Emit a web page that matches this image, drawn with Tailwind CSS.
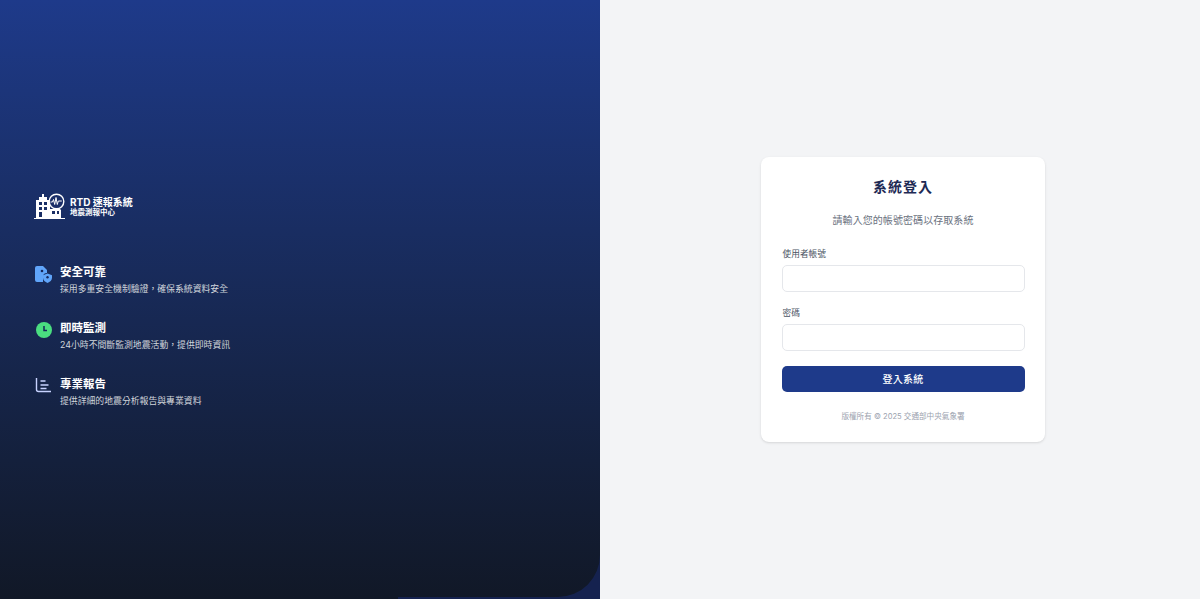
<!DOCTYPE html>
<html lang="zh-Hant">
<head>
<meta charset="utf-8">
<title>系統登入</title>
<script src="https://cdn.jsdelivr.net/npm/@tailwindcss/browser@4"></script>
</head>
<body class="font-['Inter','Noto_Sans_CJK_TC',sans-serif] bg-[#f3f4f6]">
<div class="flex h-[599px] w-[1200px] overflow-hidden">
    <!-- left panel -->
    <div class="w-[600px] h-full bg-[linear-gradient(to_right,#111827_398px,#15224f_398px)]">
        <div class="h-[597px] w-full pt-[3px] bg-gradient-to-b from-[#1e3a8a] to-[#111827] rounded-br-[42px] flex flex-col justify-center pl-[35px]">
            <div class="flex items-center h-[27px]">
                <svg class="w-[31px] h-[27px] ml-[-1px] text-white" viewBox="0 0 31 27" fill="none">
                    <path fill="currentColor" fill-rule="evenodd" d="M0 25h2V7h3V4h3V1h2v3h3v3h3v9h10l1 1v8h4v1H0zM5 9v3h3V9H5zm5 0v3h3V9h-3zM5 14v3h3v-3H5zm5 0v3h3v-3h-3zM5 19v5h3v-5H5zm13-1v3h3v-3h-3zm5 0v3h2v-3h-2z"/>
                    <circle cx="22.500" cy="8.500" r="7.300" fill="#1a2e68" stroke="currentColor" stroke-width="1.400"/>
                    <path stroke="currentColor" stroke-width="1" d="M16.500 9h2l1-2.500 1.200 5 1.300-7 1.300 7 1-3.500h3.500"/>
                </svg>
                <div class="ml-[5px] flex flex-col text-white">
                    <span class="text-[10px] leading-[12px] font-bold">RTD 速報系統</span>
                    <span class="text-[7.500px] leading-[10px] font-bold">地震測報中心</span>
                </div>
            </div>
            <div class="mt-[44px] flex flex-col gap-[25px]">
                <div class="flex items-start">
                    <svg class="w-[17px] h-[17px] mt-[2px] text-[#60a5fa]" viewBox="0 0 17 17">
                        <path fill="currentColor" d="M0 2a2 2 0 0 1 2-2h6l4 4v3a4 4 0 0 0-4 3v6H2a2 2 0 0 1-2-2z"/>
                        <path fill="currentColor" d="M12.500 7.500 17 9.200v2.600c0 2.400-2 4.200-4.500 5.200C10 16 8 14.200 8 11.800V9.200z"/>
                        <circle cx="12.500" cy="11.200" r="1.200" fill="#16275c"/>
                        <circle cx="7" cy="5" r="1.300" fill="#16275c"/>
                    </svg>
                    <div class="ml-[8px] flex flex-col">
                        <span class="text-[11.500px] leading-[17px] font-bold text-white">安全可靠</span>
                        <span class="text-[8.850px] leading-[13px] mt-[1px] text-[#d1d5db]">採用多重安全機制驗證，確保系統資料安全</span>
                    </div>
                </div>
                <div class="flex items-start">
                    <svg class="w-[16px] h-[16px] mt-[2px] ml-[0.5px] mr-[0.5px]" viewBox="0 0 16 16">
                        <circle cx="8" cy="8" r="8" fill="#4ade80"/>
                        <path d="M8 4v4.500h3" fill="none" stroke="#14275a" stroke-width="1.500"/>
                    </svg>
                    <div class="ml-[8px] flex flex-col">
                        <span class="text-[11.500px] leading-[17px] font-bold text-white">即時監測</span>
                        <span class="text-[8.850px] leading-[13px] mt-[1px] text-[#d1d5db]">24小時不間斷監測地震活動，提供即時資訊</span>
                    </div>
                </div>
                <div class="flex items-start">
                    <svg class="w-[17px] h-[15px] mt-[2px] text-[#c7d2fe]" viewBox="0 0 17 15" fill="none" stroke="currentColor" stroke-width="1.400">
                        <path d="M1.500 0v11.500a2 2 0 0 0 2 2H16"/>
                        <path d="M5.500 3h5M5.500 7h8M5.500 10.500h6"/>
                    </svg>
                    <div class="ml-[8px] flex flex-col">
                        <span class="text-[11.500px] leading-[17px] font-bold text-white">專業報告</span>
                        <span class="text-[8.850px] leading-[13px] mt-[1px] text-[#d1d5db]">提供詳細的地震分析報告與專業資料</span>
                    </div>
                </div>
            </div>
        </div>
    </div>
    <!-- right panel -->
    <div class="w-[600px] h-full flex items-center justify-center">
        <div class="w-[284px] h-[285px] bg-white rounded-[8px] shadow-sm pl-[21px] pr-[20px] pt-[20px] ml-[5px]">
            <h1 class="text-center text-[14px] leading-[20px] font-bold text-[#1e2a55] tracking-[1px]">系統登入</h1>
            <p class="text-center text-[10px] leading-[16px] mt-[15px] text-[#6b7280] tracking-[0.07px]">請輸入您的帳號密碼以存取系統</p>
            <label class="block text-[8.700px] leading-[12px] text-[#4b5563] mt-[20px] ml-[1px]">使用者帳號</label>
            <input type="text" class="block w-full h-[27px] mt-[5px] bg-white border border-[#e5e7eb] rounded-[5px]">
            <label class="block text-[8.700px] leading-[12px] text-[#4b5563] mt-[15px] ml-[1px]">密碼</label>
            <input type="password" class="block w-full h-[27px] mt-[5px] bg-white border border-[#e5e7eb] rounded-[5px]">
            <button class="block w-full h-[26px] mt-[15px] bg-[#1e3a8a] text-white rounded-[5px] text-[10px] font-medium tracking-[0.2px]">登入系統</button>
            <p class="text-center text-[7.600px] leading-[12px] mt-[19px] text-[#9ca3af]">版權所有 © 2025 交通部中央氣象署</p>
        </div>
    </div>
</div>
</body>
</html>
